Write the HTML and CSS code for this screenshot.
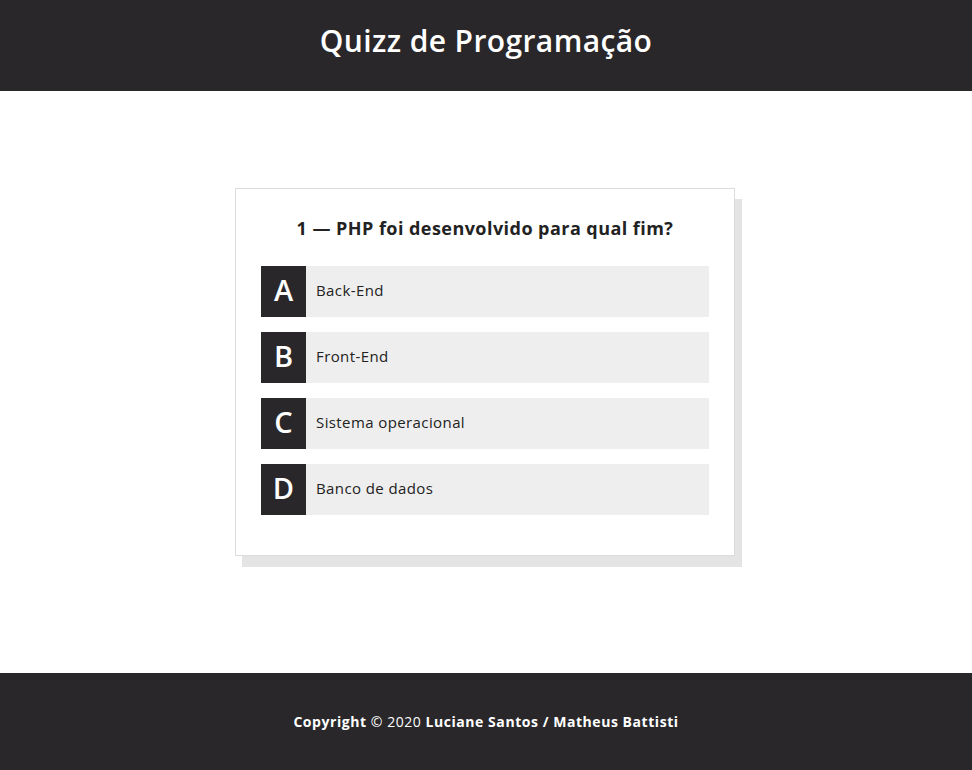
FILE: index.html
```html
<!DOCTYPE html>
<html lang="pt-BR">
<head>
<meta charset="utf-8">
<title>Quizz de Programação</title>
<link rel="stylesheet" href="styles.css">
</head>
<body>
<header class="site-header">
  <h1 class="site-title">Quizz de Programação</h1>
</header>
<main class="main">
  <div class="quiz-card">
    <h2 class="question">1 — PHP foi desenvolvido para qual fim?</h2>
    <ul class="answers">
      <li class="answer"><span class="letter">A</span><span class="answer-text">Back-End</span></li>
      <li class="answer"><span class="letter">B</span><span class="answer-text">Front-End</span></li>
      <li class="answer"><span class="letter">C</span><span class="answer-text">Sistema operacional</span></li>
      <li class="answer"><span class="letter">D</span><span class="answer-text">Banco de dados</span></li>
    </ul>
  </div>
</main>
<footer class="site-footer">
  <p class="copyright"><strong>Copyright</strong> © 2020 <strong>Luciane Santos / Matheus Battisti</strong></p>
</footer>
</body>
</html>
```

FILE: styles.css
```css
* { box-sizing: border-box; }
body {
  margin: 0;
  font-family: "Open Sans", "Noto Sans", sans-serif;
  color: #222;
  background: #fff;
}
.site-header {
  height: 91px;
  background: #29272a;
  display: flex;
  align-items: center;
  justify-content: center;
  padding-bottom: 10px;
}
.site-title {
  margin: 0;
  color: #fff;
  font-size: 30px;
  font-weight: 600;
  line-height: 1;
  letter-spacing: 0.4px;
}
.main {
  height: 582px;
  padding-top: 97px;
  padding-right: 2px;
  display: flex;
  justify-content: center;
  align-items: flex-start;
}
.quiz-card {
  width: 500px;
  border: 1px solid #dcdcdc;
  background: #fff;
  box-shadow: 7px 11px 0 #e4e4e4;
  padding: 25px;
}
.question {
  margin: 0 0 24px;
  text-align: center;
  font-size: 18px;
  font-weight: 700;
  line-height: 28px;
  letter-spacing: 0.45px;
  color: #222;
}
.answers {
  list-style: none;
  margin: 0;
  padding: 0;
}
.answer {
  display: flex;
  align-items: center;
  height: 51px;
  background: #eee;
  margin-bottom: 15px;
}
.letter {
  width: 45px;
  height: 51px;
  padding-bottom: 4px;
  background: #29272a;
  color: #fff;
  display: flex;
  align-items: center;
  justify-content: center;
  font-size: 29px;
  font-weight: 600;
}
.answer-text {
  margin-left: 10px;
  margin-bottom: 3px;
  font-size: 15px;
  letter-spacing: 0.4px;
  color: #222;
}
.site-footer {
  height: 97px;
  background: #29272a;
  display: flex;
  align-items: center;
  justify-content: center;
}
.copyright {
  margin: 0;
  color: #fff;
  font-size: 14px;
  letter-spacing: 0.55px;
}
.copyright strong { font-weight: 700; }
```
